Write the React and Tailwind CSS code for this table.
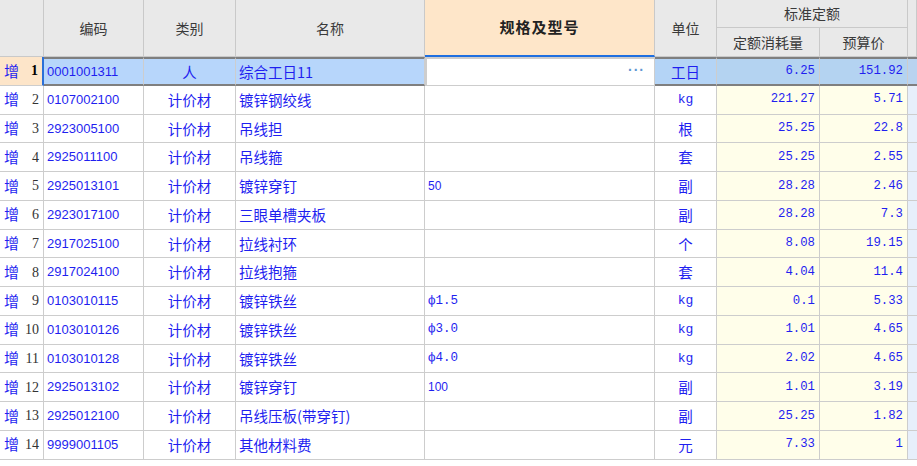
import React from "react";

const rows = [
  ["1", "0001001311", "人", "综合工日11", "", "工日", "6.25", "151.92"],
  ["2", "0107002100", "计价材", "镀锌钢绞线", "", "kg", "221.27", "5.71"],
  ["3", "2923005100", "计价材", "吊线担", "", "根", "25.25", "22.8"],
  ["4", "2925011100", "计价材", "吊线箍", "", "套", "25.25", "2.55"],
  ["5", "2925013101", "计价材", "镀锌穿钉", "50", "副", "28.28", "2.46"],
  ["6", "2923017100", "计价材", "三眼单槽夹板", "", "副", "28.28", "7.3"],
  ["7", "2917025100", "计价材", "拉线衬环", "", "个", "8.08", "19.15"],
  ["8", "2917024100", "计价材", "拉线抱箍", "", "套", "4.04", "11.4"],
  ["9", "0103010115", "计价材", "镀锌铁丝", "ф1.5", "kg", "0.1", "5.33"],
  ["10", "0103010126", "计价材", "镀锌铁丝", "ф3.0", "kg", "1.01", "4.65"],
  ["11", "0103010128", "计价材", "镀锌铁丝", "ф4.0", "kg", "2.02", "4.65"],
  ["12", "2925013102", "计价材", "镀锌穿钉", "100", "副", "1.01", "3.19"],
  ["13", "2925012100", "计价材", "吊线压板(带穿钉)", "", "副", "25.25", "1.82"],
  ["14", "9999001105", "计价材", "其他材料费", "", "元", "7.33", "1"],
];

const cols = "grid grid-cols-[44px_100px_92px_189px_230px_62px_103px_88px_9px]";
const cjk = "font-['Noto_Sans_CJK_SC',sans-serif]";
const mono = "font-['Liberation_Mono','Noto_Sans_CJK_SC',monospace]";
const hd = "flex items-center justify-center border-r border-b border-[#c9c9c9] bg-[#e9e9e9] text-[14px] text-[#3a3a3a]";

function Row({ r }) {
  const [no, code, kind, name, spec, unit, qty, price] = r;
  const sel = no === "1";
  const cell = "flex items-center border-b border-r border-[#cdcdcd] text-[#1f1ff0] min-w-0 overflow-hidden whitespace-nowrap";
  const selb = sel ? "border-t-2 border-b-2 border-t-[#7f7f7f] border-b-[#7f7f7f]" : "";
  const isMonoSpec = spec.startsWith("ф");
  const unitFont = /^[a-z]+$/.test(unit) ? mono + " text-[13px]" : cjk + " text-[14.5px]";

  return (
    <div className={`${cols} h-[28.75px]`}>
      <div
        className={`flex items-center justify-between pl-[4px] pr-[4px] border-b border-[#cdcdcd] ${
          sel ? "bg-[#fde5c9] border-r-2 border-r-[#2a6fd8]" : "bg-white border-r border-r-[#cdcdcd]"
        }`}
      >
        <span className={`${cjk} text-[15px] text-[#1f1ff0]`}>增</span>
        <span
          className={`font-['Liberation_Serif',serif] text-[14px] ${sel ? "font-bold text-black" : "text-[#333]"}`}
        >
          {no}
        </span>
      </div>
      <div className={`${cell} ${selb} pl-[3px] font-['Liberation_Sans',sans-serif] text-[13px] ${sel ? "bg-[#b7d6fb]" : "bg-white"}`}>
        {code}
      </div>
      <div className={`${cell} ${selb} justify-center ${cjk} text-[14.5px] ${sel ? "bg-[#b7d6fb]" : "bg-white"}`}>
        {kind}
      </div>
      <div className={`${cell} ${selb} pl-[3px] ${cjk} text-[14.5px] ${sel ? "bg-[#b7d6fb]" : "bg-white"}`}>
        {name}
      </div>
      <div
        className={`${cell} pl-[3px] ${
          isMonoSpec ? mono + " text-[12.5px]" : "font-['Liberation_Sans',sans-serif] text-[12px]"
        } ${sel ? "bg-white border-2 border-[#7f7f7f] justify-end pr-[9px]" : "bg-white"}`}
      >
        {sel ? <span className="text-[#5f97d2] text-[14px] font-bold tracking-[1px] leading-none pb-[4px]">···</span> : spec}
      </div>
      <div className={`${cell} ${selb} justify-center ${unitFont} ${sel ? "bg-[#b4d4f6]" : "bg-white"}`}>
        {unit}
      </div>
      <div className={`${cell} ${selb} justify-end pr-[4px] ${mono} text-[12.3px] ${sel ? "bg-[#b4d3f1]" : "bg-[#fffeea]"}`}>
        {qty}
      </div>
      <div className={`${cell} ${selb} justify-end pr-[4px] ${mono} text-[12.3px] ${sel ? "bg-[#b4d3f1]" : "bg-[#fffeea]"}`}>
        {price}
      </div>
      <div className={`border-b border-[#cdcdcd] ${selb} ${sel ? "bg-[#b9d3f0]" : "bg-[#e7effb]"}`} />
    </div>
  );
}

export default function App() {
  return (
    <div className="w-[917px] h-[466px] overflow-hidden bg-white select-none">
      <div className={`${cols} grid-rows-[28px_29px] ${cjk}`}>
        <div className={`${hd} col-start-1 row-start-1 row-span-2`} />
        <div className={`${hd} col-start-2 row-start-1 row-span-2`}>编码</div>
        <div className={`${hd} col-start-3 row-start-1 row-span-2`}>类别</div>
        <div className={`${hd} col-start-4 row-start-1 row-span-2`}>名称</div>
        <div className="col-start-5 row-start-1 row-span-2 flex items-center justify-center border-r border-[#c9c9c9] border-b-2 border-b-[#1f6fe0] bg-[#fee6c9] text-[15px] font-bold tracking-[1px] text-[#222]">
          规格及型号
        </div>
        <div className={`${hd} col-start-6 row-start-1 row-span-2`}>单位</div>
        <div className={`${hd} col-start-7 col-span-2 row-start-1`}>标准定额</div>
        <div className={`${hd} col-start-9 row-start-1 row-span-2`} />
        <div className={`${hd} col-start-7 row-start-2`}>定额消耗量</div>
        <div className={`${hd} col-start-8 row-start-2`}>预算价</div>
      </div>
      {rows.map((r) => (
        <Row key={r[0]} r={r} />
      ))}
    </div>
  );
}
